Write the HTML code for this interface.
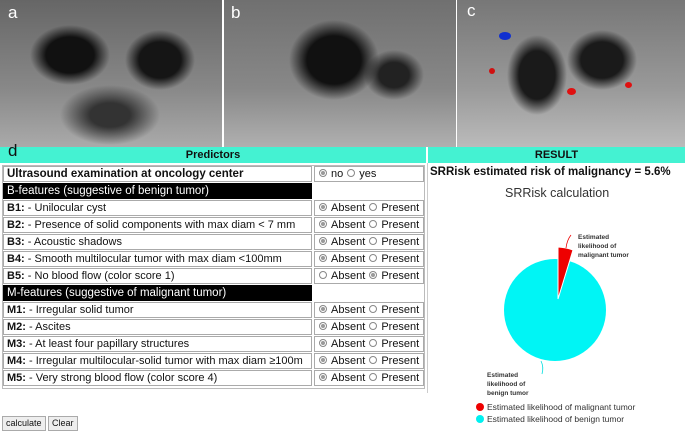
<!DOCTYPE html>
<html><head><style>
*{margin:0;padding:0;box-sizing:border-box}
body{width:685px;height:432px;background:#fff;position:relative;overflow:hidden;font-family:"Liberation Sans",sans-serif;font-size:11px;color:#111}
.img{position:absolute;top:0;height:147px;overflow:hidden}
.lab{position:absolute;color:#fff;font-size:17px;font-family:"Liberation Sans",sans-serif}
.bar{position:absolute;top:147px;height:16px;background:#44f2d2;font-weight:bold;text-align:center;font-size:11px;line-height:16px}
.row{position:absolute;left:3px;height:17px}
.c1{position:absolute;left:0;width:309px;height:16px;border:1px solid #aaa;padding-left:3px;line-height:14px;white-space:nowrap;overflow:hidden}
.c2{position:absolute;left:311px;width:110px;height:16px;border:1px solid #aaa;padding-left:3px;line-height:14px;white-space:nowrap;font-size:11px;overflow:hidden}
.blk{background:#000;color:#fff;border-color:#000}
.r{display:inline-block;width:8px;height:8px;border:1px solid #888;border-radius:50%;vertical-align:0px;margin-right:4px;margin-left:1px;position:relative}
.r.on::after{content:"";position:absolute;left:1px;top:1px;width:4px;height:4px;border-radius:50%;background:#999}
.btn{position:absolute;top:416px;height:15px;border:1px solid #aaa;background:#eee;font-size:9px;font-family:"Liberation Sans",sans-serif;line-height:13px;padding:0 3px}
</style></head><body>
<div class="img" style="left:0;width:222px;background:radial-gradient(ellipse 40px 30px at 70px 55px,#111 60%,transparent 100%),radial-gradient(ellipse 35px 30px at 160px 60px,#151515 60%,transparent 100%),radial-gradient(ellipse 50px 30px at 110px 115px,#333 40%,transparent 100%),linear-gradient(180deg,#666,#888 60%,#aaa)"></div>
<div class="img" style="left:224px;width:232px;background:radial-gradient(ellipse 45px 40px at 110px 60px,#111 60%,transparent 100%),radial-gradient(ellipse 30px 25px at 170px 75px,#222 50%,transparent 100%),linear-gradient(180deg,#707070,#888 60%,#b0b0b0)"></div>
<div class="img" style="left:457px;width:228px;background:radial-gradient(ellipse 30px 40px at 80px 75px,#1a1a1a 60%,transparent 100%),radial-gradient(ellipse 35px 30px at 145px 60px,#1a1a1a 60%,transparent 100%),linear-gradient(180deg,#777,#999 60%,#bbb)">
<div style="position:absolute;left:42px;top:32px;width:12px;height:8px;background:#1030d0;border-radius:50%"></div>
<div style="position:absolute;left:110px;top:88px;width:9px;height:7px;background:#e01010;border-radius:50%"></div>
<div style="position:absolute;left:168px;top:82px;width:7px;height:6px;background:#e01010;border-radius:50%"></div>
<div style="position:absolute;left:32px;top:68px;width:6px;height:6px;background:#d01010;border-radius:50%"></div>
</div>
<div class="lab" style="left:8px;top:3px">a</div>
<div class="lab" style="left:231px;top:3px">b</div>
<div class="lab" style="left:467px;top:1px">c</div>
<div class="bar" style="left:0;width:426px">Predictors</div>
<div class="bar" style="left:428px;width:257px">RESULT</div>
<div style="position:absolute;left:8px;top:141px;font-size:17px;font-family:'Liberation Sans',sans-serif;line-height:20px">d</div>
<div style="position:absolute;left:2px;top:165px;width:423px;height:224px;border:1px solid #bbb"></div>

<div class="row" style="top:166px"><div class="c1" style="font-size:11.5px"><b>Ultrasound examination at oncology center</b></div><div class="c2"><span class="r on"></span>no <span class="r"></span>yes</div></div>
<div class="row" style="top:183px"><div class="c1 blk" style="font-size:11.5px">B-features (suggestive of benign tumor)</div></div>
<div class="row" style="top:200px"><div class="c1"><b>B1:</b> - Unilocular cyst</div><div class="c2"><span class="r on"></span>Absent <span class="r"></span>Present</div></div>
<div class="row" style="top:217px"><div class="c1"><b>B2:</b> - Presence of solid components with max diam &lt; 7 mm</div><div class="c2"><span class="r on"></span>Absent <span class="r"></span>Present</div></div>
<div class="row" style="top:234px"><div class="c1"><b>B3:</b> - Acoustic shadows</div><div class="c2"><span class="r on"></span>Absent <span class="r"></span>Present</div></div>
<div class="row" style="top:251px"><div class="c1"><b>B4:</b> - Smooth multilocular tumor with max diam &lt;100mm</div><div class="c2"><span class="r on"></span>Absent <span class="r"></span>Present</div></div>
<div class="row" style="top:268px"><div class="c1"><b>B5:</b> - No blood flow (color score 1)</div><div class="c2"><span class="r"></span>Absent <span class="r on"></span>Present</div></div>
<div class="row" style="top:285px"><div class="c1 blk" style="font-size:11.5px">M-features (suggestive of malignant tumor)</div></div>
<div class="row" style="top:302px"><div class="c1"><b>M1:</b> - Irregular solid tumor</div><div class="c2"><span class="r on"></span>Absent <span class="r"></span>Present</div></div>
<div class="row" style="top:319px"><div class="c1"><b>M2:</b> - Ascites</div><div class="c2"><span class="r on"></span>Absent <span class="r"></span>Present</div></div>
<div class="row" style="top:336px"><div class="c1"><b>M3:</b> - At least four papillary structures</div><div class="c2"><span class="r on"></span>Absent <span class="r"></span>Present</div></div>
<div class="row" style="top:353px"><div class="c1"><b>M4:</b> - Irregular multilocular-solid tumor with max diam ≥100m</div><div class="c2"><span class="r on"></span>Absent <span class="r"></span>Present</div></div>
<div class="row" style="top:370px"><div class="c1"><b>M5:</b> - Very strong blood flow (color score 4)</div><div class="c2"><span class="r on"></span>Absent <span class="r"></span>Present</div></div>

<div class="btn" style="left:2px">calculate</div>
<div class="btn" style="left:48px">Clear</div>

<div style="position:absolute;left:427px;top:163px;width:1px;height:230px;background:#ccc"></div>
<div style="position:absolute;left:430px;top:166px;font-weight:bold;font-size:11.5px;white-space:nowrap">SRRisk estimated risk of malignancy = 5.6%</div>
<div style="position:absolute;left:505px;top:186px;font-size:12.5px;color:#333">SRRisk calculation</div>
<svg style="position:absolute;left:425px;top:145px" width="260" height="287">
<circle cx="130" cy="165" r="51" fill="#00f5f5"/>
<path d="M133 154 L133 102 A51 51 0 0 1 148 105 Z" fill="#ee0000" stroke="#fff" stroke-width="1"/>
<path d="M141 103 Q142 95 146 90" stroke="#e00" fill="none" stroke-width="0.8"/>
<path d="M116 216 Q119 222 117 229" stroke="#0dd" fill="none" stroke-width="0.8"/>
<g font-size="6.5" fill="#333" font-family="Liberation Sans,sans-serif" font-weight="bold">
<text x="153" y="94">Estimated</text><text x="153" y="103">likelihood of</text><text x="153" y="112">malignant tumor</text>
<text x="62" y="232">Estimated</text><text x="62" y="241">likelihood of</text><text x="62" y="250">benign tumor</text>
</g>
<circle cx="55" cy="262" r="4" fill="#e00"/><circle cx="55" cy="274" r="4" fill="#00f0f0"/>
<g font-size="8.5" fill="#333" font-family="Liberation Sans,sans-serif"><text x="62" y="265">Estimated likelihood of malignant tumor</text><text x="62" y="277">Estimated likelihood of benign tumor</text></g>
</svg>
</body></html>
